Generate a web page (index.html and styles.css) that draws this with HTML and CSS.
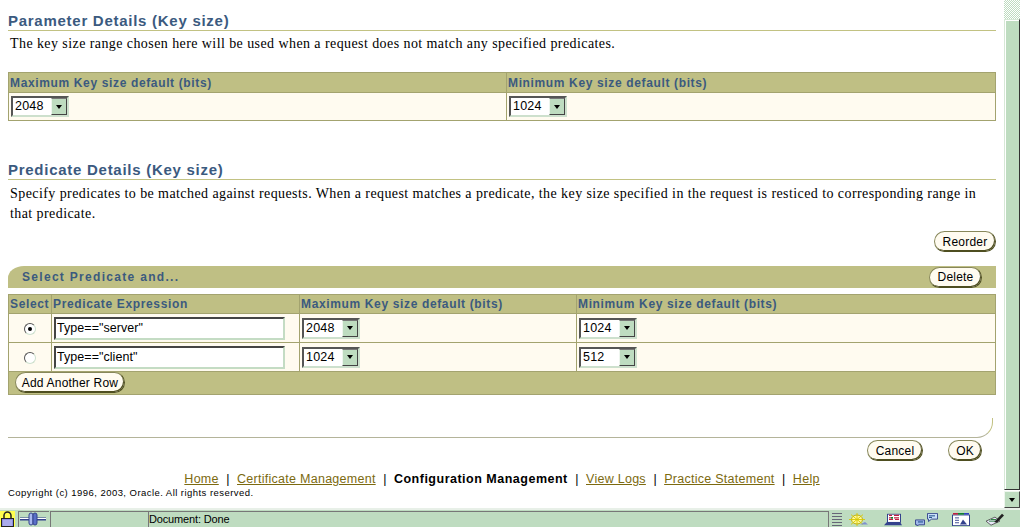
FILE: index.html
```html
<!DOCTYPE html>
<html lang="en">
<head>
<meta charset="utf-8">
<title>Configuration Management</title>
<link rel="stylesheet" href="styles.css">
</head>
<body>
<div class="window">
  <div class="viewport">
    <main class="page">
      <h2 class="section-title first">Parameter Details (Key size)</h2>
      <p class="desc">The key size range chosen here will be used when a request does not match any specified predicates.</p>
      <table class="grid params">
        <colgroup><col class="p-a"><col></colgroup>
        <tr><th>Maximum Key size default (bits)</th><th>Minimum Key size default (bits)</th></tr>
        <tr class="row-p">
          <td><span class="select w-a"><span class="val">2048</span><span class="drop"><i></i></span></span></td>
          <td><span class="select w-a"><span class="val">1024</span><span class="drop"><i></i></span></span></td>
        </tr>
      </table>

      <h2 class="section-title second">Predicate Details (Key size)</h2>
      <p class="desc two">Specify predicates to be matched against requests. When a request matches a predicate, the key size specified in the request is resticed to corresponding range in that predicate.</p>
      <div class="reorder-row"><button class="pill reorder">Reorder</button></div>

      <div class="action-bar">
        <span class="action-title">Select Predicate and...</span>
        <button class="pill delete">Delete</button>
      </div>

      <table class="grid predicates">
        <colgroup><col class="c-sel"><col class="c-expr"><col class="c-max"><col></colgroup>
        <tr><th>Select</th><th>Predicate Expression</th><th>Maximum Key size default (bits)</th><th>Minimum Key size default (bits)</th></tr>
        <tr class="row-q">
          <td class="center"><span class="radio on"></span></td>
          <td><input class="expr" type="text" value="Type==&quot;server&quot;"></td>
          <td><span class="select w-a"><span class="val">2048</span><span class="drop"><i></i></span></span></td>
          <td><span class="select w-a"><span class="val">1024</span><span class="drop"><i></i></span></span></td>
        </tr>
        <tr class="row-q">
          <td class="center"><span class="radio"></span></td>
          <td><input class="expr" type="text" value="Type==&quot;client&quot;"></td>
          <td><span class="select w-a"><span class="val">1024</span><span class="drop"><i></i></span></span></td>
          <td><span class="select w-a"><span class="val">512</span><span class="drop"><i></i></span></span></td>
        </tr>
        <tr class="row-add"><td colspan="4"><button class="pill add">Add Another Row</button></td></tr>
      </table>

      <div class="bottom-rule"></div>
      <div class="bottom-actions">
        <button class="pill cancel">Cancel</button>
        <button class="pill ok">OK</button>
      </div>
      <nav class="footer-links">
        <a href="#">Home</a><span class="sep">|</span><a href="#">Certificate Management</a><span class="sep">|</span><b>Configuration Management</b><span class="sep">|</span><a href="#">View Logs</a><span class="sep">|</span><a href="#">Practice Statement</a><span class="sep">|</span><a href="#">Help</a>
      </nav>
      <p class="copyright">Copyright (c) 1996, 2003, Oracle. All rights reserved.</p>
    </main>
    <div class="scrollbar">
      <div class="track"></div>
      <div class="thumb"></div>
      <div class="arrow"><i></i></div>
    </div>
  </div>
  <footer class="status">
    <div class="st-lock">
      <svg width="15" height="16" viewBox="0 0 15 16"><rect width="15" height="16" fill="#ffff50"/><path d="M4 8V4.500a3.500 3.500 0 0 1 7 0V8" fill="none" stroke="#222" stroke-width="1.500"/><rect x="1.500" y="7.500" width="12" height="8" fill="#8c8ce0" stroke="#222"/><path d="M3 10h9M3 12h9M3 14h9" stroke="#c8c8f4"/></svg>
    </div>
    <div class="st-conn">
      <svg width="28" height="14" viewBox="0 0 28 14"><path d="M1 7h26" stroke="#33428c" stroke-width="3"/><path d="M1 6.500h9M18 6.500h9" stroke="#fff" stroke-width="1"/><rect x="10" y="1" width="4" height="12" rx="2" fill="#a8b8f0" stroke="#33428c"/><rect x="14" y="1" width="4" height="12" rx="2" fill="#5a70c8" stroke="#33428c"/></svg>
    </div>
    <div class="st-progress"></div>
    <div class="st-text">Document: Done</div>
    <div class="st-icons">
      <span class="grip"></span>
      <svg class="ic-sun" width="20" height="13" viewBox="0 0 20 16" preserveAspectRatio="none"><circle cx="9" cy="8" r="5.500" fill="#fff9a0" stroke="#b8a800"/><path d="M9 0v16M1 8h16M3 2l12 12M15 2L3 14" stroke="#d8c800"/><path d="M12 14h8l-3-3z" fill="#7d8fd0"/></svg>
      <svg class="ic-print" width="18" height="13" viewBox="0 0 18 16" preserveAspectRatio="none"><rect x="3.500" y="1.500" width="13" height="10" fill="#fff" stroke="#33428c"/><path d="M5 3h3M10 3h5M5 6h2M10 6h5M5 8h4M11 8h4" stroke="#c02040" stroke-width="1.500"/><path d="M7 5h2v2H7z" fill="#108030"/><path d="M0 15l3-4h13l2 4z" fill="#33428c"/></svg>
      <svg class="ic-chat" width="23" height="13" viewBox="0 0 23 16" preserveAspectRatio="none"><path d="M.500 8.500h9v6H4l-2 1.500v-1.500H.500z" fill="#9fb8e8" stroke="#33428c"/><path d="M3 11h5" stroke="#104080"/><path d="M12.500 .500h10v7h-6l-3 3v-3h-1z" fill="#c8e0f8" stroke="#33428c"/><path d="M14 3.500h6M14 5.500h3" stroke="#104080"/></svg>
      <svg class="ic-card" width="18" height="13" viewBox="0 0 18 16" preserveAspectRatio="none"><rect x=".500" y="2.500" width="17" height="13" fill="#fff" stroke="#33428c"/><path d="M1 1h5" stroke="#c02040" stroke-width="2"/><path d="M6 1h6" stroke="#108030" stroke-width="2"/><path d="M12 1h5" stroke="#3040c0" stroke-width="2"/><path d="M3 6h4M3 9h4M3 12h4" stroke="#33428c"/><path d="M8 14l3-6 4 6z" fill="#33428c"/></svg>
      <svg class="ic-pen" width="20" height="13" viewBox="0 0 20 16" preserveAspectRatio="none"><path d="M1 10l9-5 5 5-9 5z" fill="#e8e8f8" stroke="#555"/><path d="M9 11L17 1l2 2-7 9z" fill="#222"/><path d="M4 10h6M6 8h5" stroke="#1a7a30"/></svg>
    </div>
  </footer>
</div>
</body>
</html>
```

FILE: styles.css
```css
* { box-sizing: border-box; }
html, body { margin: 0; height: 100%; overflow: hidden; background: #fff; }
body { font-family: "Liberation Sans", Arial, sans-serif; color: #000; }
.window { width: 1020px; height: 527px; display: flex; flex-direction: column; }
.viewport { height: 508px; display: flex; }
.page { width: 1004px; padding: 0 8px; overflow: hidden; }

.section-title {
  margin: 0; padding: 0; color: #3b5a7f; font-size: 15px; line-height: 18px; font-weight: bold;
  letter-spacing: 0.73px; border-bottom: 1px solid #c2c283; height: 19px;
}
.section-title.first { margin-top: 12px; }
.section-title.second { margin-top: 40px; }
.desc { margin: 0; padding: 3px 2px 0; font: 14px/20px "Liberation Serif", serif; letter-spacing: 0.42px; height: 32px; }
.desc.two { height: 46px; padding-top: 4px; }

.grid { border-collapse: collapse; width: 988px; table-layout: fixed; }
.grid th, .grid td { border: 1px solid #a3a36f; padding: 0; }
.grid th {
  background: #bfbf84; color: #3b5a7f; font-size: 12px; text-align: left; font-weight: bold;
  letter-spacing: 0.64px; height: 20px; padding-left: 1px; white-space: nowrap;
}
.grid td { background: #fffbf0; }
.params { margin-top: 9px; }
.p-a { width: 498px; }
.row-p td { height: 28px; padding: 0 2px; }
.c-sel { width: 43px; } .c-expr { width: 248px; } .c-max { width: 277px; }
.predicates th { height: 19px; }
.row-q td { height: 29px; padding: 0 2px; }
.center { text-align: center; }

.select {
  display: inline-flex; vertical-align: middle; height: 21px; background: #fff; align-items: stretch;
  border: 2px solid; border-color: #555 #cde0cd #cde0cd #555;
  font-size: 12.500px;
}
.w-a { width: 58px; }
.val { flex: 1; line-height: 17px; padding-left: 2px; letter-spacing: 0.2px; }
.drop { width: 16px; background: #bedcc0; border: 1px solid; border-color: #777 #444 #444 #eef6ee; display: flex; align-items: center; justify-content: center; }
.drop i, .arrow i { display: block; width: 0; height: 0; border: 3px solid transparent; border-top: 4px solid #000; border-bottom: 0; }

.pill {
  font: 12px/16px "Liberation Sans", Arial, sans-serif; letter-spacing: 0.2px; color: #000; background: #fffbf0; padding: 0;
  height: 21px; border: 1px solid; border-color: #87875a #4e4e20 #4e4e20 #87875a; border-radius: 10.500px;
  box-shadow: inset -1px -1px 0 #4e4e20; display: inline-block; text-align: center;
}
.reorder-row { display: flex; justify-content: flex-end; height: 21px; margin-top: 5px; }
.reorder { width: 62px; }

.action-bar {
  margin-top: 14px; height: 22px; background: #bfbf84; border-top-left-radius: 16px 12px;
  display: flex; align-items: center; justify-content: space-between; padding: 0 14px;
}
.action-title { color: #3b5a7f; font-size: 12px; font-weight: bold; letter-spacing: 1.3px; }
.delete { width: 53px; }
.predicates { margin-top: 6px; }
.expr {
  display: block; width: 231px; height: 23px; margin: 0; padding: 0 1px;
  font: 12.500px "Liberation Sans", Arial, sans-serif; letter-spacing: 0.05px;
  border: 2px solid; border-color: #444 #c4dcc4 #c4dcc4 #444; outline: none; background: #fff; color: #000;
}
.radio {
  display: inline-block; width: 12px; height: 12px; border-radius: 50%; background: #fff; vertical-align: middle;
  border: 1px solid #555; border-right-color: #cde0cd; border-bottom-color: #cde0cd; position: relative;
}
.radio.on::after { content: ""; position: absolute; left: 3px; top: 3px; width: 4px; height: 4px; border-radius: 50%; background: #000; }
.grid .row-add td { background: #bfbf84; height: 23px; padding: 0 0 1px 6px; }
.add { width: 110px; display: block; }

.bottom-rule {
  margin-top: 23px; height: 20px; width: 985px; border-bottom: 1px solid #b4b49a; border-right: 1px solid #c2c283; border-bottom-right-radius: 16px;
}
.bottom-actions { display: flex; justify-content: flex-end; gap: 25px; padding-right: 14px; height: 31px; margin-top: 2px; }
.cancel { width: 56px; }
.ok { width: 34px; }
.footer-links { text-align: center; font-size: 12.500px; letter-spacing: 0.27px; line-height: 16px; margin-top: 0; }
.footer-links a { color: #7c6a10; }
.footer-links b { font-size: 12.500px; letter-spacing: 0.5px; }
.sep { margin: 0 7.500px; letter-spacing: 0; }
.copyright { margin: 0; font-size: 9.500px; line-height: 12px; letter-spacing: 0.45px; }

.scrollbar { width: 16px; display: flex; flex-direction: column; }
.track { height: 19px; background: repeating-conic-gradient(#bedcc0 0 25%, #fff 0 50%) 0 0 / 2px 2px; }
.thumb { flex: 1; background: #bedcc0; border: 1px solid; border-color: #d6e8d6 #333 #333 #d6e8d6; box-shadow: inset 1px 1px 0 #fff; }
.arrow { height: 17px; margin-top: 1px; background: #bedcc0; border: 1px solid; border-color: #eef6ee #444 #444 #eef6ee; display: flex; align-items: center; justify-content: center; }

.status { height: 19px; background: #bedcc0; border-top: 2px solid #e8f0e8; display: flex; font-size: 11px; align-items: stretch; color: #000; }
.status > div { border-left: 1px solid #777; border-top: 1px solid #777; margin-top: 1px; }
.status .st-lock { width: 15px; border: 0; margin: 1px 0 0; overflow: hidden; }
.st-conn { width: 31px; margin-left: 3px; }
.st-progress { width: 98px; margin-left: 1px; }
.st-text { width: 680px; padding-left: 0; line-height: 15px; letter-spacing: -0.15px; }
.st-icons { flex: 1; display: flex; padding: 0 0 1px; align-items: flex-end; border-top: 0 !important; }
.grip { width: 10px; height: 13px; margin-left: 3px; background: repeating-linear-gradient(#667 0 1px, transparent 1px 3px); }
.ic-sun { margin-left: 6px; }
.ic-print { margin-left: 16px; }
.ic-chat { margin-left: 13px; }
.ic-card { margin-left: 14px; }
.ic-pen { margin-left: 15px; }
```
